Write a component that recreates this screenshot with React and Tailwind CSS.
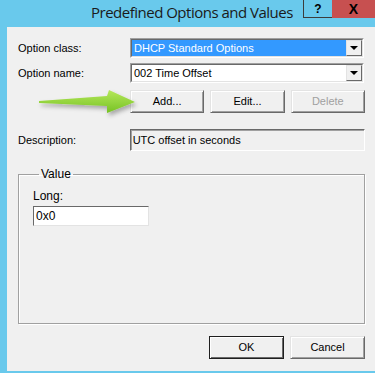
import React from "react";

const font = { fontFamily: '"Liberation Sans", Arial, sans-serif' };

const Combo = ({ value, selected }) => (
  <div className="flex h-[20px] w-[234px] border border-t-[#a0a0a0] border-l-[#a0a0a0] border-b-white border-r-white">
    <div className="flex flex-1 border border-t-[#696969] border-l-[#696969] border-b-[#e3e3e3] border-r-[#e3e3e3] bg-white">
      <div
        className={`flex flex-1 items-center pl-[2px] text-[11px] leading-none ${
          selected ? "bg-[#3399ff] text-white" : "text-black"
        }`}
      >
        {value}
      </div>
      <div className="flex w-[16px] items-center justify-center border border-t-[#e3e3e3] border-l-[#e3e3e3] border-b-[#696969] border-r-[#696969] bg-[#f0f0f0]">
        <div className="h-0 w-0 border-x-[4px] border-t-[4px] border-x-transparent border-t-black" />
      </div>
    </div>
  </div>
);

const Button = ({ children, disabled, primary }) => (
  <div
    className={`flex h-[23px] w-[75px] items-center justify-center bg-[#f0f0f0] text-[11px] ${
      primary
        ? "border border-[#1f1f1f] shadow-[inset_1px_1px_0_#ffffff,inset_-1px_-1px_0_#696969]"
        : "border border-t-[#e3e3e3] border-l-[#e3e3e3] border-b-[#696969] border-r-[#696969] shadow-[inset_1px_1px_0_#ffffff,inset_-1px_-1px_0_#a0a0a0]"
    } ${disabled ? "text-[#a0a0a0]" : "text-black"}`}
  >
    {children}
  </div>
);

const Arrow = () => (
  <svg className="absolute left-[28px] top-[58px]" width="110" height="36" viewBox="0 0 110 36">
    <defs>
      <linearGradient id="g" x1="0" y1="0" x2="0" y2="1">
        <stop offset="0" stopColor="#b6e85a" />
        <stop offset="1" stopColor="#76c224" />
      </linearGradient>
      <filter id="s" x="-10%" y="-30%" width="130%" height="170%">
        <feDropShadow dx="2" dy="3" stdDeviation="2" floodColor="#000" floodOpacity="0.3" />
      </filter>
    </defs>
    <polygon
      points="4,16 72,11 74,5 100,17 72,28 72,21 4,18"
      fill="url(#g)"
      filter="url(#s)"
    />
  </svg>
);

export default function App() {
  return (
    <div className="flex h-[373px] w-[375px] flex-col overflow-hidden bg-[#69c9ec]" style={font}>
      <div className="flex h-[27px] shrink-0 items-start">
        <div
          className="flex h-[27px] flex-1 items-center pl-[91px] pb-[3px] text-[15px] text-[#1a1a1a]"
          style={{ fontFamily: '"Open Sans", "Liberation Sans", sans-serif', letterSpacing: "-0.5px" }}
        >
          Predefined Options and Values
        </div>
        <div className="flex h-[18px] w-[29px] items-center justify-center border-b border-l border-[#3c3c3c] text-[12px] font-bold text-black">
          ?
        </div>
        <div className="flex h-[18px] w-[43px] items-center justify-center bg-[#c75050] text-[14px] font-bold text-black">
          X
        </div>
      </div>

      <div className="relative mb-[2px] ml-[7px] flex flex-1 flex-col bg-[#f0f0f0] pl-[11px] pr-[10px] pt-[11px] text-[11px] text-black">
        <div className="flex items-center">
          <div className="w-[112px]">Option class:</div>
          <Combo value="DHCP Standard Options" selected />
        </div>
        <div className="mt-[5px] flex items-center">
          <div className="w-[112px]">Option name:</div>
          <Combo value="002 Time Offset" />
        </div>
        <div className="ml-[112px] mt-[7px] flex gap-[6px]">
          <Button>Add...</Button>
          <Button>Edit...</Button>
          <Button disabled>Delete</Button>
        </div>
        <div className="mt-[16px] flex items-center">
          <div className="w-[112px]">Description:</div>
          <div className="flex h-[22px] w-[236px] items-center border border-t-[#696969] border-l-[#696969] border-b-white border-r-white pl-[2px] shadow-[inset_1px_1px_0_#a0a0a0]">
            UTC offset in seconds
          </div>
        </div>

        <fieldset className="mt-[14px] h-[159px] w-[347px] border border-[#a0a0a0] pl-[14px] shadow-[inset_1px_1px_0_#ffffff,1px_1px_0_#ffffff]">
          <legend className="ml-[6px] px-[2px] text-[12px]">Value</legend>
          <div className="mt-[4px] text-[12px]">Long:</div>
          <div className="mt-[1px] flex h-[20px] w-[116px] items-center border border-t-[#696969] border-l-[#696969] border-b-[#e3e3e3] border-r-[#e3e3e3] bg-white pl-[2px] text-[12px]">
            0x0
          </div>
        </fieldset>

        <div className="mt-[12px] flex justify-end gap-[6px]">
          <Button primary>OK</Button>
          <Button>Cancel</Button>
        </div>

        <Arrow />
      </div>
    </div>
  );
}
